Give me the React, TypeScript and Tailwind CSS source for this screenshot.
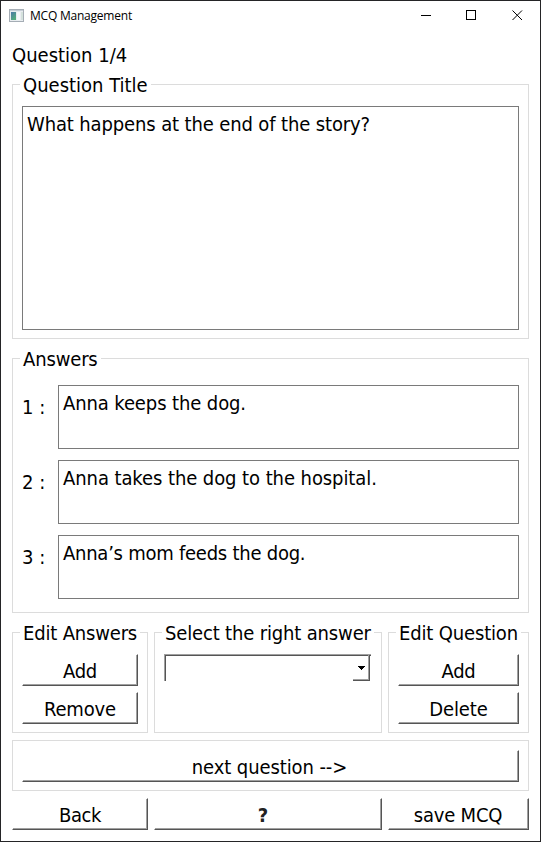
import type { ReactNode } from "react";

function Group({ title, spacing = "", className = "", children }: { title?: string; spacing?: string; className?: string; children: ReactNode }) {
  return (
    <section className={`flex flex-col border border-[#dcdcdc] px-[9px] ${className}`}>
      {title && (
        <h2 className={`-mt-[12px] -mb-px -ml-[2px] h-[24px] w-max shrink-0 bg-white px-[3px] leading-[24px] whitespace-nowrap ${spacing}`}>{title}</h2>
      )}
      {children}
    </section>
  );
}

function PushButton({ children, className = "" }: { children: ReactNode; className?: string }) {
  return (
    <button className={`h-8 shrink-0 border border-t-white border-r-[#555] border-b-[#555] border-l-white bg-white pt-px leading-[30px] whitespace-nowrap shadow-[inset_-1px_-1px_0_#a0a0a0] ${className}`}>
      {children}
    </button>
  );
}

const answers = [
  { text: "Anna keeps the dog.", spacing: "tracking-[-0.11px]" },
  { text: "Anna takes the dog to the hospital.", spacing: "tracking-[-0.08px]" },
  { text: "Anna’s mom feeds the dog.", spacing: "tracking-[-0.25px]" },
];

function TitleBar() {
  return (
    <header className="flex h-[30px] shrink-0 items-center pl-2 font-['Open_Sans','Noto_Sans',sans-serif] text-[12px]">
      <svg width="15" height="13" viewBox="0 0 15 13" className="-mt-[2px]" shapeRendering="crispEdges">
        <defs>
          <linearGradient id="pane" x1="0" y1="0" x2="0.6" y2="1">
            <stop offset="0" stopColor="#4d78a8" />
            <stop offset="1" stopColor="#55ad7c" />
          </linearGradient>
        </defs>
        <path d="M0 0h15v13H0z" fill="#a5adb5" />
        <path d="M1 1h13v11H1z" fill="#e9edf0" />
        <path d="M1 1h13v1H1z" fill="#c5cdd5" />
        <path d="M2 3h5v8H2z" fill="url(#pane)" />
        <path d="M8 3h3v8H8z" fill="#f7f8fa" />
        <path d="M12 3h2v8h-2z" fill="#d4e1dc" />
      </svg>
      <h1 className="-mt-px ml-[6px] leading-4 tracking-[-0.22px]">MCQ Management</h1>
      <div className="ml-auto flex h-full items-center">
        <svg width="115" height="12" viewBox="0 0 115 12" className="-mt-[2px] mr-[13px]" fill="none" stroke="#000">
          <path d="M9 6.5h10M54.500 1.500h9v9h-9z" shapeRendering="crispEdges" />
          <path d="m100.500 1.500 9.500 9.500m0-9.500-9.500 9.500" />
        </svg>
      </div>
    </header>
  );
}

export default function App() {
  return (
    <main className="flex h-[842px] w-[541px] flex-col border border-[#242426] bg-white font-['DejaVu_Sans_Condensed','DejaVu_Sans',sans-serif] text-[20px] text-black">
      <TitleBar />
      <div className="flex flex-col px-[11px]">
        <p className="mt-3 h-6 leading-6">Question 1/4</p>
        <Group title="Question Title" className="mt-[17px] h-[255px]">
          <div className="mt-[10px] h-[224px] border border-[#7a7a7a] px-1 pt-[5px] leading-6 tracking-[-0.13px]">What happens at the end of the story?</div>
        </Group>
        <Group title="Answers" spacing="tracking-[-0.15px]" className="mt-[19px] h-[255px]">
          <div className="mt-[15px] flex flex-col gap-[11px]">
            {answers.map((answer, i) => (
              <div key={i} className="flex h-16">
                <span className="w-9 pt-[10px] leading-6">{i + 1} :</span>
                <div className={`flex-1 border border-[#7a7a7a] px-1 pt-[5px] leading-6 ${answer.spacing}`}>{answer.text}</div>
              </div>
            ))}
          </div>
        </Group>
        <div className="mt-[19px] grid h-[101px] grid-cols-[136px_228px_141px] gap-x-[6px]">
          <Group title="Edit Answers" spacing="tracking-[-0.18px]">
            <PushButton className="mt-[10px] tracking-[-0.2px]">Add</PushButton>
            <PushButton className="mt-[6px] tracking-[-0.15px]">Remove</PushButton>
          </Group>
          <Group title="Select the right answer" spacing="tracking-[-0.16px]">
            <div className="mt-[10px] flex h-[27px] w-[207px] justify-end border-t border-l border-[#a0a0a0] shadow-[inset_1px_1px_0_#555]">
              <button className="mr-px flex h-[26px] w-[17px] items-center justify-center border-r border-b border-[#555] shadow-[inset_-1px_-1px_0_#a0a0a0,inset_0_1px_0_#555]" aria-label="Open">
                <svg width="7" height="4" viewBox="0 0 7 4" shapeRendering="crispEdges"><path d="M0 0h7v1H6v1H5v1H4v1H3V3H2V2H1V1H0z" /></svg>
              </button>
            </div>
          </Group>
          <Group title="Edit Question" spacing="tracking-[-0.16px]">
            <PushButton className="mt-[10px] tracking-[-0.2px]">Add</PushButton>
            <PushButton className="mt-[6px] tracking-[-0.1px]">Delete</PushButton>
          </Group>
        </div>
        <Group className="mt-[7px] h-[51px] pt-[9px]">
          <PushButton className="pr-[2px] tracking-[-0.1px]">next question --&gt;</PushButton>
        </Group>
        <footer className="mt-[7px] grid grid-cols-[136px_228px_141px] gap-x-[6px]">
          <PushButton className="tracking-[-0.4px]">Back</PushButton>
          <PushButton className="pr-[10px] font-bold text-[#222]">?</PushButton>
          <PushButton className="pr-px tracking-[-0.2px]">save MCQ</PushButton>
        </footer>
      </div>
    </main>
  );
}
